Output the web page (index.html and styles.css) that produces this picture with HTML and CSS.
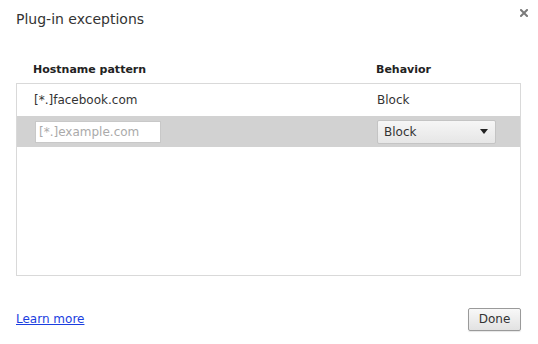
FILE: index.html
```html
<!DOCTYPE html>
<html>
<head>
<meta charset="utf-8">
<link rel="stylesheet" href="styles.css">
</head>
<body>
<div class="dialog">
  <div class="titlebar">
    <h1 class="title">Plug-in exceptions</h1>
    <span class="close" aria-label="close">
      <svg width="8" height="8" viewBox="0 0 8 8"><path d="M1 1L7 7M7 1L1 7" stroke="#7a7a7a" stroke-width="2" stroke-linecap="square"/></svg>
    </span>
  </div>
  <div class="content">
    <div class="cols head">
      <div class="c1">Hostname pattern</div>
      <div class="c2">Behavior</div>
    </div>
    <div class="list">
      <div class="cols row">
        <div class="c1">[*.]facebook.com</div>
        <div class="c2">Block</div>
      </div>
      <div class="cols row sel">
        <div class="c1"><div class="input">[*.]example.com</div></div>
        <div class="c2"><div class="select"><span>Block</span><span class="arrow"></span></div></div>
      </div>
    </div>
  </div>
  <div class="footer">
    <a class="link" href="#">Learn more</a>
    <button class="btn">Done</button>
  </div>
</div>
</body>
</html>
```
FILE: styles.css
```css
html, body { margin: 0; padding: 0; background: #fff; }
body { font-family: "DejaVu Sans", "Liberation Sans", sans-serif; color: #333; font-size: 12px; }
.dialog { width: 538px; height: 344px; box-sizing: border-box; padding: 0 17px 0 16px; display: flex; flex-direction: column; }
.titlebar { display: flex; justify-content: space-between; align-items: flex-start; height: 49px; }
.title { margin: 0; padding-top: 10px; font-size: 14px; font-weight: normal; color: #333; line-height: 18px; }
.close { margin-top: 9px; margin-right: -7px; display: block; width: 8px; height: 8px; }
.close svg { display: block; }
.content { display: flex; flex-direction: column; }
.cols { display: flex; align-items: center; }
.c1 { width: 343px; padding-left: 17px; box-sizing: border-box; }
.c2 { flex: 1; padding-left: 17px; box-sizing: border-box; }
.head { height: 34px; font-weight: bold; font-size: 11px; color: #222; }
.head .c1, .head .c2 { padding-top: 6px; }
.list { border: 1px solid #d9d9d9; height: 191px; }
.row { height: 32px; }
.row.sel { background: #d2d2d2; height: 31px; }
.input { width: 126px; height: 22px; box-sizing: border-box; border: 1px solid #c8c8c8; background: #fff; color: #aaa; line-height: 20px; padding-left: 3px; margin-left: 1px; }
.select { width: 119px; height: 24px; box-sizing: border-box; border: 1px solid #c4c4c4; border-radius: 2px; background: linear-gradient(#f6f6f6, #e6e6e6); display: flex; align-items: center; justify-content: space-between; padding: 0 7px 0 6px; color: #333; }
.arrow { width: 0; height: 0; border-left: 4px solid transparent; border-right: 4px solid transparent; border-top: 5px solid #222; }
.footer { margin-top: auto; height: 36px; margin-bottom: 7px; display: flex; justify-content: space-between; align-items: center; }
.link { color: #1a3ee0; text-decoration: underline; font-size: 12px; }
.btn { width: 53px; height: 23px; font-family: inherit; font-size: 12px; color: #333; border: 1px solid #9a9a9a; border-radius: 2px; background: linear-gradient(#f8f8f8, #e2e2e2); padding: 0; margin-right: 0; box-shadow: 0 1px 1px rgba(0,0,0,0.1); }
```
